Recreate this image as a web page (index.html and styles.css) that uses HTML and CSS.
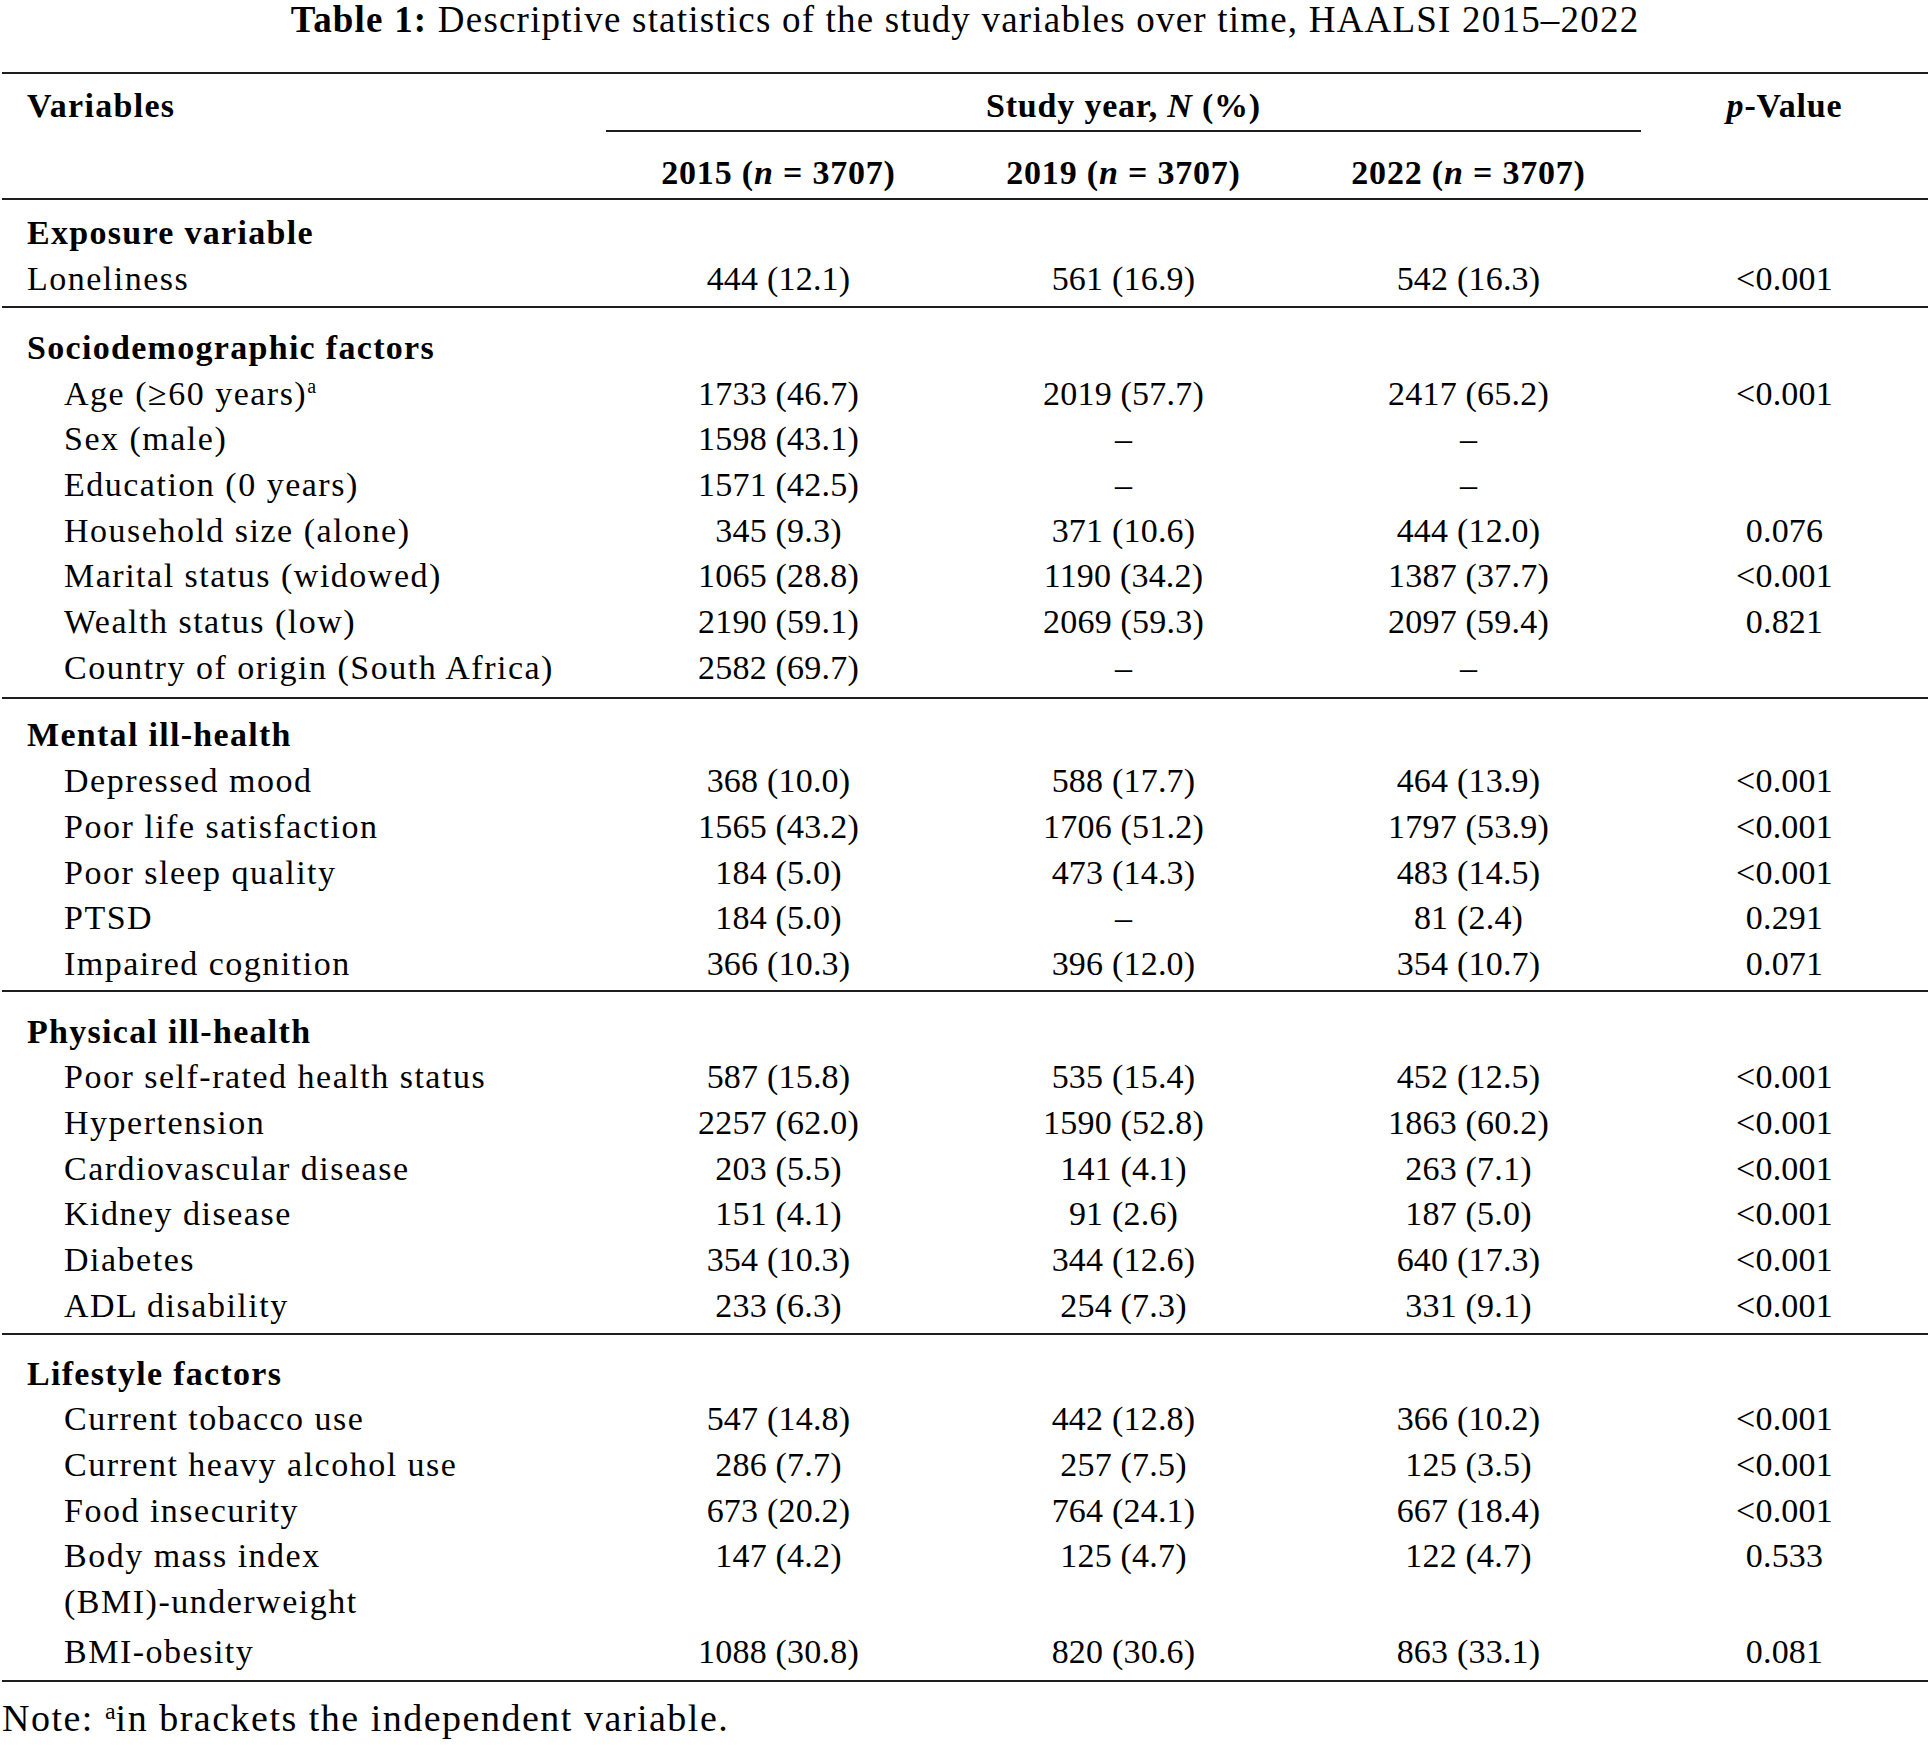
FILE: index.html
```html
<!DOCTYPE html>
<html lang="en">
<head>
<meta charset="utf-8">
<title>Table 1</title>
<link rel="stylesheet" href="styles.css">
</head>
<body>
<div class="page">
  <div class="caption"><b>Table 1:</b> Descriptive statistics of the study variables over time, HAALSI 2015–2022</div>
  <table class="stats">
    <colgroup>
      <col class="c-var"><col class="c-num"><col class="c-num"><col class="c-num"><col class="c-p">
    </colgroup>
    <thead>
      <tr class="h1">
        <th class="var">Variables</th>
        <th colspan="3" class="span">Study year, <i>N</i> (%)</th>
        <th><i>p</i>-Value</th>
      </tr>
      <tr class="h2">
        <th></th>
        <th>2015 (<i>n</i> = 3707)</th>
        <th>2019 (<i>n</i> = 3707)</th>
        <th>2022 (<i>n</i> = 3707)</th>
        <th></th>
      </tr>
    </thead>
    <tbody class="g1">
      <tr class="sec"><td class="var">Exposure variable</td><td></td><td></td><td></td><td></td></tr>
      <tr><td class="sub0">Loneliness</td><td>444 (12.1)</td><td>561 (16.9)</td><td>542 (16.3)</td><td>&lt;0.001</td></tr>
    </tbody>
    <tbody class="g2">
      <tr class="sec"><td class="var">Sociodemographic factors</td><td></td><td></td><td></td><td></td></tr>
      <tr><td class="sub">Age (≥60 years)<sup class="fn">a</sup></td><td>1733 (46.7)</td><td>2019 (57.7)</td><td>2417 (65.2)</td><td>&lt;0.001</td></tr>
      <tr><td class="sub">Sex (male)</td><td>1598 (43.1)</td><td>–</td><td>–</td><td></td></tr>
      <tr><td class="sub">Education (0 years)</td><td>1571 (42.5)</td><td>–</td><td>–</td><td></td></tr>
      <tr><td class="sub">Household size (alone)</td><td>345 (9.3)</td><td>371 (10.6)</td><td>444 (12.0)</td><td>0.076</td></tr>
      <tr><td class="sub">Marital status (widowed)</td><td>1065 (28.8)</td><td>1190 (34.2)</td><td>1387 (37.7)</td><td>&lt;0.001</td></tr>
      <tr><td class="sub">Wealth status (low)</td><td>2190 (59.1)</td><td>2069 (59.3)</td><td>2097 (59.4)</td><td>0.821</td></tr>
      <tr><td class="sub">Country of origin (South Africa)</td><td>2582 (69.7)</td><td>–</td><td>–</td><td></td></tr>
    </tbody>
    <tbody class="g3">
      <tr class="sec"><td class="var">Mental ill-health</td><td></td><td></td><td></td><td></td></tr>
      <tr><td class="sub">Depressed mood</td><td>368 (10.0)</td><td>588 (17.7)</td><td>464 (13.9)</td><td>&lt;0.001</td></tr>
      <tr><td class="sub">Poor life satisfaction</td><td>1565 (43.2)</td><td>1706 (51.2)</td><td>1797 (53.9)</td><td>&lt;0.001</td></tr>
      <tr><td class="sub">Poor sleep quality</td><td>184 (5.0)</td><td>473 (14.3)</td><td>483 (14.5)</td><td>&lt;0.001</td></tr>
      <tr><td class="sub">PTSD</td><td>184 (5.0)</td><td>–</td><td>81 (2.4)</td><td>0.291</td></tr>
      <tr><td class="sub">Impaired cognition</td><td>366 (10.3)</td><td>396 (12.0)</td><td>354 (10.7)</td><td>0.071</td></tr>
    </tbody>
    <tbody class="g4">
      <tr class="sec"><td class="var">Physical ill-health</td><td></td><td></td><td></td><td></td></tr>
      <tr><td class="sub">Poor self-rated health status</td><td>587 (15.8)</td><td>535 (15.4)</td><td>452 (12.5)</td><td>&lt;0.001</td></tr>
      <tr><td class="sub">Hypertension</td><td>2257 (62.0)</td><td>1590 (52.8)</td><td>1863 (60.2)</td><td>&lt;0.001</td></tr>
      <tr><td class="sub">Cardiovascular disease</td><td>203 (5.5)</td><td>141 (4.1)</td><td>263 (7.1)</td><td>&lt;0.001</td></tr>
      <tr><td class="sub">Kidney disease</td><td>151 (4.1)</td><td>91 (2.6)</td><td>187 (5.0)</td><td>&lt;0.001</td></tr>
      <tr><td class="sub">Diabetes</td><td>354 (10.3)</td><td>344 (12.6)</td><td>640 (17.3)</td><td>&lt;0.001</td></tr>
      <tr><td class="sub">ADL disability</td><td>233 (6.3)</td><td>254 (7.3)</td><td>331 (9.1)</td><td>&lt;0.001</td></tr>
    </tbody>
    <tbody class="g5">
      <tr class="sec"><td class="var">Lifestyle factors</td><td></td><td></td><td></td><td></td></tr>
      <tr><td class="sub">Current tobacco use</td><td>547 (14.8)</td><td>442 (12.8)</td><td>366 (10.2)</td><td>&lt;0.001</td></tr>
      <tr><td class="sub">Current heavy alcohol use</td><td>286 (7.7)</td><td>257 (7.5)</td><td>125 (3.5)</td><td>&lt;0.001</td></tr>
      <tr><td class="sub">Food insecurity</td><td>673 (20.2)</td><td>764 (24.1)</td><td>667 (18.4)</td><td>&lt;0.001</td></tr>
      <tr class="wrap"><td class="sub">Body mass index<br>(BMI)-underweight</td><td>147 (4.2)</td><td>125 (4.7)</td><td>122 (4.7)</td><td>0.533</td></tr>
      <tr><td class="sub">BMI-obesity</td><td>1088 (30.8)</td><td>820 (30.6)</td><td>863 (33.1)</td><td>0.081</td></tr>
    </tbody>
  </table>
  <p class="note">Note: <sup class="fn-note">a</sup>in brackets the independent variable.</p>
</div>
</body>
</html>
```

FILE: styles.css
```css
html, body {
  margin: 0;
  padding: 0;
  background: #ffffff;
}

body {
  font-family: "Liberation Serif", "Times New Roman", serif;
  color: #000000;
}

.page {
  padding: 0 2px;
}

.caption {
  font-size: 37px;
  line-height: 40px;
  letter-spacing: 1.2px;
  text-align: center;
  margin: 0 0 32px 0;
}

.stats {
  width: 100%;
  table-layout: fixed;
  border-collapse: collapse;
  font-size: 34px;
  line-height: 45.7px;
  letter-spacing: 0.2px;
  border-top: 2px solid #1e1e1e;
  border-bottom: 2px solid #1e1e1e;
}

.c-var { width: 604px; }
.c-num { width: 345px; }
.c-p { width: auto; }

.stats th,
.stats td {
  padding: 0;
  text-align: center;
  vertical-align: top;
  font-weight: normal;
  white-space: nowrap;
}

.stats th {
  font-weight: bold;
  letter-spacing: 0.8px;
}

.stats .var {
  text-align: left;
  padding-left: 25px;
  letter-spacing: 1.3px;
}

.stats .sub0 {
  text-align: left;
  padding-left: 25px;
  letter-spacing: 1.5px;
}

.stats .sub {
  text-align: left;
  padding-left: 62px;
  letter-spacing: 1.5px;
}

.stats thead tr.h1 th {
  padding-top: 9px;
  padding-bottom: 1px;
}

.stats thead th.span {
  border-bottom: 2px solid #1e1e1e;
}

.stats thead tr.h2 th {
  padding-top: 18px;
  padding-bottom: 3px;
}

.stats thead {
  border-bottom: 2px solid #1e1e1e;
}

.stats tbody {
  border-top: 2px solid #1e1e1e;
}

.stats tr.sec td {
  font-weight: bold;
  padding-top: 16px;
}

.stats tbody tr:last-child td {
  padding-bottom: 4px;
}

.stats tbody.g1 tr.sec td { padding-top: 10px; }
.stats tbody.g2 tr.sec td { padding-top: 17px; }
.stats tbody.g2 tr:last-child td { padding-bottom: 6.5px; }
.stats tbody.g3 tr.sec td { padding-top: 13.5px; }
.stats tbody.g3 tr:last-child td { padding-bottom: 3px; }
.stats tbody.g4 tr.sec td { padding-top: 17px; }
.stats tbody.g5 tr:last-child td { padding-bottom: 5.2px; }

.stats tr.wrap td {
  padding-bottom: 4px;
}

.fn {
  font-size: 20px;
  line-height: 0;
  vertical-align: 12px;
  letter-spacing: 0;
}

.note {
  margin: 14px 0 0 0;
  font-size: 38px;
  line-height: 45.7px;
  letter-spacing: 1.5px;
}

.fn-note {
  font-size: 24px;
  line-height: 0;
  vertical-align: 12px;
  letter-spacing: 0;
}
```
